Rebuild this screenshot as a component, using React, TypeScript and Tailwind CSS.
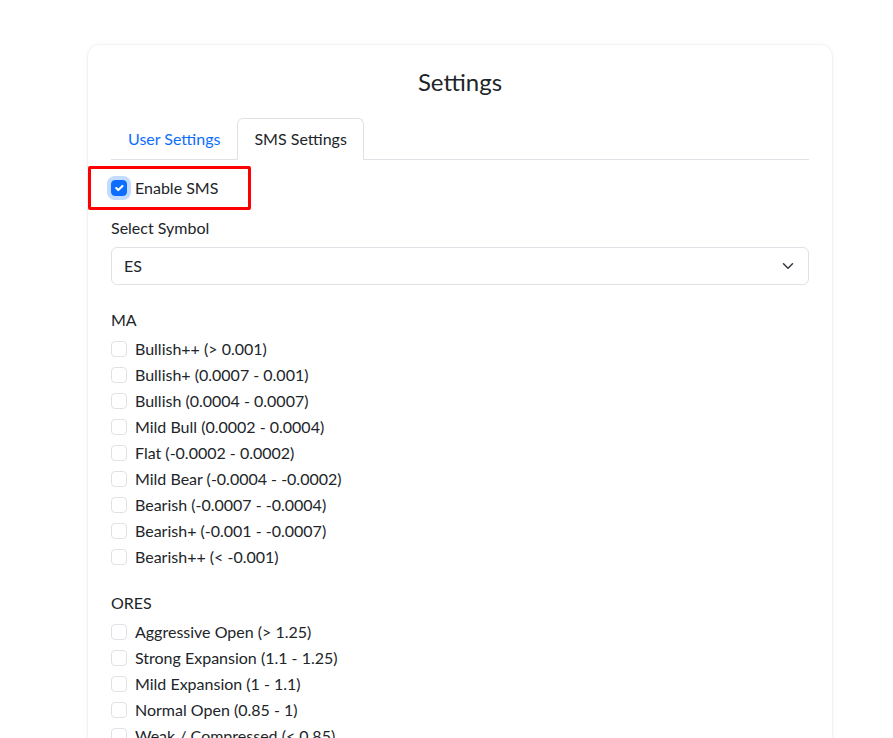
import React from "react";

const maOptions = [
  "Bullish++ (> 0.001)",
  "Bullish+ (0.0007 - 0.001)",
  "Bullish (0.0004 - 0.0007)",
  "Mild Bull (0.0002 - 0.0004)",
  "Flat (-0.0002 - 0.0002)",
  "Mild Bear (-0.0004 - -0.0002)",
  "Bearish (-0.0007 - -0.0004)",
  "Bearish+ (-0.001 - -0.0007)",
  "Bearish++ (< -0.001)",
];

const oresOptions = [
  "Aggressive Open (> 1.25)",
  "Strong Expansion (1.1 - 1.25)",
  "Mild Expansion (1 - 1.1)",
  "Normal Open (0.85 - 1)",
  "Weak / Compressed (< 0.85)",
];

function CheckRow({ label }: { label: string }) {
  return (
    <label className="flex items-center h-6 mb-[2px] gap-2">
      <span className="w-4 h-4 rounded-[4px] border border-[#dee2e6] bg-white shrink-0" />
      <span className="leading-6">{label}</span>
    </label>
  );
}

function Group({ title, items }: { title: string; items: string[] }) {
  return (
    <div className="mb-[22px]">
      <div className="leading-6 mb-[5px]">{title}</div>
      {items.map((t) => (
        <CheckRow key={t} label={t} />
      ))}
    </div>
  );
}

export default function App() {
  return (
    <div
      className="min-h-screen bg-white text-[#212529] text-base pl-[87px] pt-[44px]"
      style={{ fontFamily: "Lato, 'Noto Sans', sans-serif" }}
    >
      <div className="w-[746px] rounded-xl border border-[#f2f2f2] bg-white shadow-[0_0_6px_rgba(0,0,0,0.03)] px-[23px] pt-[23px] pb-6">
        <h3 className="text-2xl leading-[1.2] text-center mb-[21px]">Settings</h3>

        <div className="flex border-b border-[#dee2e6]">
          <button className="px-4 py-2 leading-6 border border-transparent text-[#0d6efd] -mb-px">
            User Settings
          </button>
          <button className="px-4 py-2 leading-6 border border-[#dee2e6] border-b-white rounded-t-md bg-white -mb-px">
            SMS Settings
          </button>
        </div>

        <div className="pt-4">
          <div className="relative mb-4">
            <label className="flex items-center h-6 gap-2">
              <span className="w-4 h-4 rounded-[4px] bg-[#0d6efd] border border-[#0d6efd] shadow-[0_0_0_4px_rgba(13,110,253,0.25)] flex items-center justify-center shrink-0">
                <svg viewBox="0 0 20 20" className="w-4 h-4">
                  <path d="m6 10 3 3 6-6" fill="none" stroke="#fff" strokeWidth="3" strokeLinecap="round" strokeLinejoin="round" />
                </svg>
              </span>
              <span className="leading-6">Enable SMS</span>
            </label>
            <div className="absolute left-[-23px] top-[-10px] w-[163px] h-[44px] border-[3px] border-[#ff0000] rounded-[2px] pointer-events-none" />
          </div>

          <div className="leading-6 mb-[7px]">Select Symbol</div>
          <div className="flex items-center justify-between h-[38px] border border-[#dee2e6] rounded-md pl-3 pr-3 mb-[23px]">
            <span>ES</span>
            <svg viewBox="0 0 16 16" className="w-4 h-3">
              <path d="m2 5 6 6 6-6" fill="none" stroke="#343a40" strokeWidth="2" strokeLinecap="round" strokeLinejoin="round" />
            </svg>
          </div>

          <Group title="MA" items={maOptions} />
          <Group title="ORES" items={oresOptions} />
        </div>
      </div>
    </div>
  );
}
